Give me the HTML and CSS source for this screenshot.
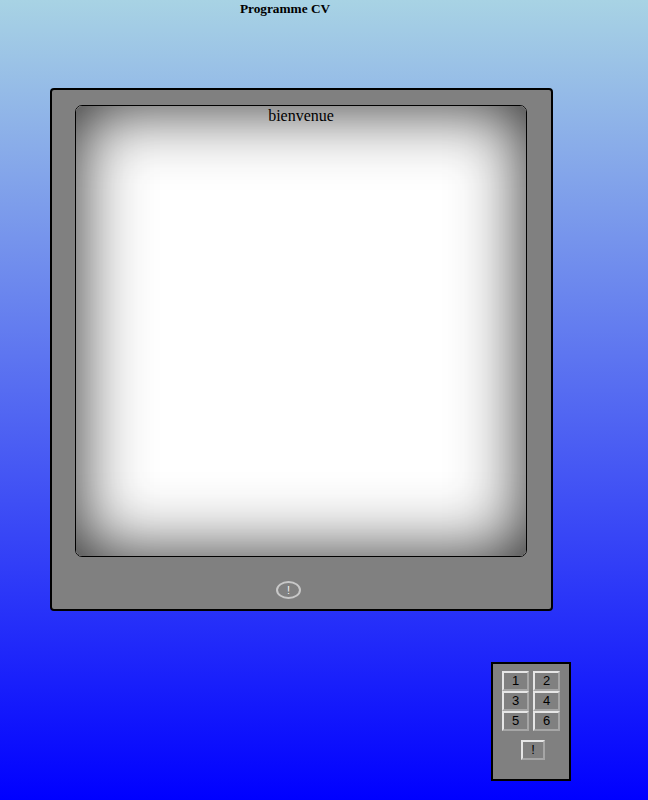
FILE: index.html
```html
<!DOCTYPE html>
<html>
<head>
<meta charset="utf-8">
<link rel="stylesheet" href="styles.css">
</head>
<body>
<div class="title">Programme CV</div>
<div class="tv">
  <div class="screen"><div class="screen-text">bienvenue</div></div>
  <div class="tv-bottom"><button class="power">!</button></div>
</div>
<div class="remote">
  <div class="keys">
    <button class="key">1</button>
    <button class="key">2</button>
    <button class="key">3</button>
    <button class="key">4</button>
    <button class="key">5</button>
    <button class="key">6</button>
  </div>
  <button class="key key-bang">!</button>
</div>
</body>
</html>
```
FILE: styles.css
```css
html, body {
  margin: 0;
  padding: 0;
}
body {
  width: 648px;
  height: 800px;
  overflow: hidden;
  background: linear-gradient(to bottom, #a8d3e4 0%, #0000ff 100%);
  font-family: "Liberation Serif", "Times New Roman", serif;
  display: flex;
  flex-direction: column;
}
.title {
  width: 570px;
  text-align: center;
  font-weight: bold;
  font-size: 13.3px;
  line-height: 16px;
  padding-top: 1px;
  color: #000;
}
.tv {
  margin-top: 71px;
  margin-left: 50px;
  width: 499px;
  height: 519px;
  background: #808080;
  border: 2px solid #000;
  border-radius: 4px;
  display: flex;
  flex-direction: column;
  align-items: flex-start;
}
.screen {
  margin-top: 15px;
  margin-left: 23px;
  width: 450px;
  height: 450px;
  border: 1px solid #000;
  border-radius: 7px;
  background: #fff;
  box-shadow: inset 0 0 70px #222;
  display: flex;
  justify-content: center;
}
.screen-text {
  font-size: 16px;
  line-height: 18px;
  padding-top: 1px;
  color: #000;
}
.tv-bottom {
  width: 476px;
  display: flex;
  justify-content: center;
  margin-top: 24px;
}
.power {
  width: 25px;
  height: 18px;
  padding: 0;
  margin-right: 3px;
  border: 2px solid #c8c8c8;
  border-radius: 50%;
  background: #808080;
  color: #f4f4f4;
  font-family: "Liberation Sans", Arial, sans-serif;
  font-size: 11px;
  line-height: 12px;
}
.remote {
  margin-top: 51px;
  margin-left: 491px;
  width: 76px;
  height: 115px;
  background: #808080;
  border: 2px solid #000;
  display: flex;
  flex-direction: column;
  align-items: center;
}
.keys {
  margin-top: 7px;
  display: grid;
  grid-template-columns: 27px 27px;
  grid-auto-rows: 20px;
  column-gap: 4px;
}
.key {
  box-sizing: border-box;
  width: 27px;
  height: 20px;
  padding: 0;
  margin: 0;
  background: #808080;
  border: 2px solid;
  border-color: #e6e6e6 #a6a6a6 #a6a6a6 #e6e6e6;
  color: #000;
  font-family: "Liberation Sans", Arial, sans-serif;
  font-size: 13px;
  line-height: 14px;
}
.key-bang {
  width: 24px;
  margin-top: 9px;
  margin-left: 4px;
}
```
